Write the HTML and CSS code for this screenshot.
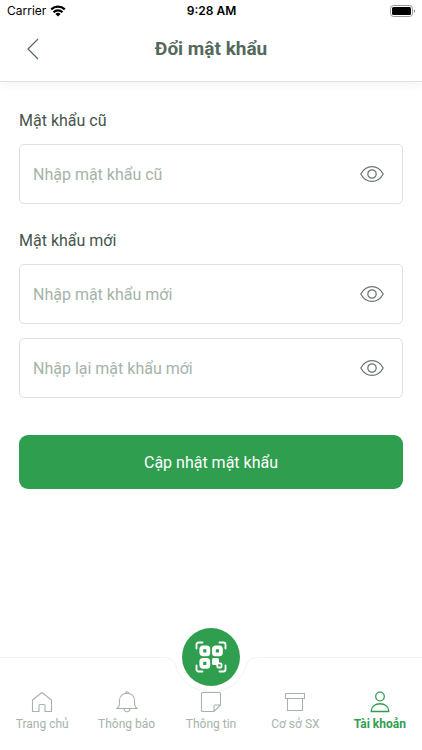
FILE: index.html
```html
<!DOCTYPE html>
<html lang="vi">
<head>
<meta charset="utf-8">
<meta name="viewport" content="width=device-width, initial-scale=1">
<title>Đổi mật khẩu</title>
<link rel="stylesheet" href="styles.css">
</head>
<body>
<div class="screen">
  <div class="status">
    <div class="carrier">
      <span>Carrier</span>
      <svg width="16" height="12" viewBox="0 0 16 12" aria-hidden="true"><g fill="none" stroke="#000" stroke-width="2.200"><path d="M1.200 4.400a9.800 9.800 0 0 1 13.600 0"/><path d="M3.500 7.200a6.400 6.400 0 0 1 9 0"/></g><path d="M5.400 9a3.800 3.800 0 0 1 5.200 0L8 11.600z"/></svg>
    </div>
    <span class="time">9:28 AM</span>
    <svg class="battery" width="26" height="12" viewBox="0 0 26 12" aria-hidden="true"><rect x=".5" y=".5" width="22" height="11" rx="3" fill="none" stroke="#999"/><rect x="2" y="2" width="19" height="8" rx="1.500"/><path d="M24 4.300v3.400c1.400-.6 1.400-2.800 0-3.400z" fill="#888"/></svg>
  </div>
  <header class="header">
    <button class="back" type="button" aria-label="Quay lại"><svg width="12" height="22" viewBox="0 0 12 22"><path d="M11 1 1 11l10 10"/></svg></button>
    <h1>Đổi mật khẩu</h1>
  </header>
  <main>
    <form class="form">
      <label class="label" for="old">Mật khẩu cũ</label>
      <div class="field">
        <input id="old" type="password" placeholder="Nhập mật khẩu cũ">
        <button class="eye" type="button" aria-label="Hiện mật khẩu cũ"><svg width="24" height="18" viewBox="0 0 24 18"><path d="M.8 9C3.500 4 7.300 1.600 12 1.600S20.500 4 23.200 9C20.500 14 16.700 16.400 12 16.400S3.500 14 .8 9z"/><circle cx="12" cy="9" r="4.200"/></svg></button>
      </div>
      <label class="label" for="new">Mật khẩu mới</label>
      <div class="field">
        <input id="new" type="password" placeholder="Nhập mật khẩu mới">
        <button class="eye" type="button" aria-label="Hiện mật khẩu mới"><svg width="24" height="18" viewBox="0 0 24 18"><path d="M.8 9C3.500 4 7.300 1.600 12 1.600S20.500 4 23.200 9C20.500 14 16.700 16.400 12 16.400S3.500 14 .8 9z"/><circle cx="12" cy="9" r="4.200"/></svg></button>
      </div>
      <div class="field repeat">
        <input type="password" placeholder="Nhập lại mật khẩu mới" aria-label="Nhập lại mật khẩu mới">
        <button class="eye" type="button" aria-label="Hiện mật khẩu nhập lại"><svg width="24" height="18" viewBox="0 0 24 18"><path d="M.8 9C3.500 4 7.300 1.600 12 1.600S20.500 4 23.200 9C20.500 14 16.700 16.400 12 16.400S3.500 14 .8 9z"/><circle cx="12" cy="9" r="4.200"/></svg></button>
      </div>
      <button class="submit" type="submit">Cập nhật mật khẩu</button>
    </form>
  </main>
  <nav class="nav">
    <div class="edge" aria-hidden="true">
      <span class="line"></span>
      <svg width="96" height="40" viewBox="0 0 96 40"><path d="M0 .5c8 0 11 3 13 9C18 25 31 34.500 48 34.500S78 25 83 9.500c2-6 5-9 13-9"/></svg>
      <span class="line"></span>
    </div>
    <button class="scan" type="button" aria-label="Quét mã QR">
      <svg width="32" height="32" viewBox="0 0 32 32">
        <g fill="none" stroke="#fff" stroke-width="1.800" stroke-linecap="round" stroke-linejoin="round"><path d="M1.500 7.500v-4a2 2 0 0 1 2-2h4M24.500 1.500h4a2 2 0 0 1 2 2v4M30.500 24.500v4a2 2 0 0 1-2 2h-4M7.500 30.500h-4a2 2 0 0 1-2-2v-4"/></g>
        <g fill="none" stroke="#fff" stroke-width="3.800"><rect x="6.300" y="6.300" width="7" height="7" rx="1.600"/><rect x="18.900" y="6.300" width="7" height="7" rx="1.600"/><rect x="6.300" y="18.900" width="7" height="7" rx="1.600"/></g>
        <rect x="17" y="17" width="7" height="7" rx="1.600" fill="#fff"/>
        <rect x="22.300" y="22.300" width="4.200" height="4.200" rx="1" fill="#2f9e4f" stroke="#fff" stroke-width="1.800"/>
      </svg>
    </button>
    <div class="tabs">
      <a href="#"><svg width="22" height="22" viewBox="0 0 22 22"><path d="M1.500 9 11 1.500 20.500 9v11.500H14V14.500q0-1-1-1H9q-1 0-1 1v6H1.500z"/></svg><span>Trang chủ</span></a>
      <a href="#"><svg width="22" height="22" viewBox="0 0 22 22"><path d="M1 17.500c2.500-2 2.500-3.500 2.500-8C3.500 5 6.800 2.300 11 2.300s7.500 2.700 7.500 7.200c0 4.500 0 6 2.500 8zM9.500 2.200c0-2 3-2 3 0M8 17.700c.5 4 5.500 4 6 0"/></svg><span>Thông báo</span></a>
      <a href="#"><svg width="22" height="22" viewBox="0 0 22 22"><path d="M2.500 1.500h17q1 0 1 1V14L14 20.500H2.500q-1 0-1-1v-17q0-1 1-1zM14 20.500V15q0-1 1-1h5.500"/></svg><span>Thông tin</span></a>
      <a href="#"><svg width="22" height="22" viewBox="0 0 22 22"><path d="M1.500 2.500h19v5h-19zM3.500 7.500v12h15v-12"/></svg><span>Cơ sở SX</span></a>
      <a class="active" href="#" aria-current="page"><svg width="22" height="22" viewBox="0 0 22 22"><circle cx="11" cy="5.500" r="4.300"/><path d="M2.300 20.500v-1c0-9 17.400-9 17.400 0v1z"/></svg><span>Tài khoản</span></a>
    </div>
  </nav>
</div>
</body>
</html>
```
FILE: styles.css
```css
* { box-sizing: border-box; }
body {
  margin: 0;
  background: #fff;
  color: #46544c;
  font-family: Roboto, "Noto Sans", sans-serif;
}
button { border: 0; padding: 0; background: none; font: inherit; cursor: pointer; }
svg { display: block; }
.screen { display: flex; flex-direction: column; min-height: 100vh; }
.status {
  display: grid;
  grid-template-columns: 1fr auto 1fr;
  align-items: center;
  height: 22px;
  padding: 0 6px 0 7px;
  color: #000;
  font: 12px/22px Inter, sans-serif;
}
.carrier { display: flex; align-items: center; gap: 4px; }
.time { font-weight: 600; }
.battery { justify-self: end; }
.header {
  display: grid;
  grid-template-columns: 28px 1fr 28px;
  align-items: center;
  height: 60px;
  padding: 0 19px 6px;
  border-bottom: 1px solid #e0e0e0;
  box-shadow: 0 4px 8px rgba(0, 0, 0, 0.04);
}
.header h1 {
  margin: 0;
  color: #54695c;
  font-size: 19px;
  line-height: 24px;
  text-align: center;
}
.back { display: flex; align-items: center; justify-content: center; height: 32px; }
.back svg { fill: none; stroke: #54695c; stroke-width: 1.2; }
main { flex: 1; padding: 27px 19px; }
.form { display: flex; flex-direction: column; }
.label { margin-bottom: 11px; font-size: 16px; line-height: 24px; }
.field {
  display: flex;
  align-items: center;
  height: 60px;
  padding: 0 18px 0 13px;
  border: 1px solid #dde1df;
  border-radius: 5px;
}
.field + .label { margin-top: 25px; }
.repeat { margin-top: 14px; }
.field input {
  flex: 1;
  min-width: 0;
  height: 56px;
  padding: 0;
  border: 0;
  outline: 0;
  background: none;
  color: #46544c;
  font: 16px Roboto, "Noto Sans", sans-serif;
}
.field input::placeholder { color: #a5b3aa; opacity: 1; }
.eye svg { fill: none; stroke: #68756e; stroke-width: 1.2; }
.submit {
  height: 54px;
  margin-top: 37px;
  border-radius: 9px;
  background: #2f9e4f;
  color: #fff;
  font-size: 16px;
}
.nav { position: relative; height: 93px; }
.edge { display: flex; align-items: flex-start; height: 34px; }
.edge svg { fill: none; stroke: #f3f3f3; }
.line { flex: 1; border-top: 1px solid #f3f3f3; }
.scan {
  position: absolute;
  top: -29px;
  left: calc(50% - 29px);
  display: flex;
  align-items: center;
  justify-content: center;
  width: 58px;
  height: 58px;
  border-radius: 50%;
  background: #2f9e4f;
}
.tabs { display: grid; grid-template-columns: repeat(5, 1fr); }
.tabs a {
  display: flex;
  flex-direction: column;
  align-items: center;
  gap: 2px;
  color: #a5b3aa;
  font-size: 12px;
  line-height: 18px;
  text-decoration: none;
  white-space: nowrap;
}
.tabs svg { fill: none; stroke: currentColor; stroke-width: 1.1; }
.tabs .active { color: #2f9e4f; font-weight: 700; }
.tabs .active svg { stroke-width: 1.3; }
```
